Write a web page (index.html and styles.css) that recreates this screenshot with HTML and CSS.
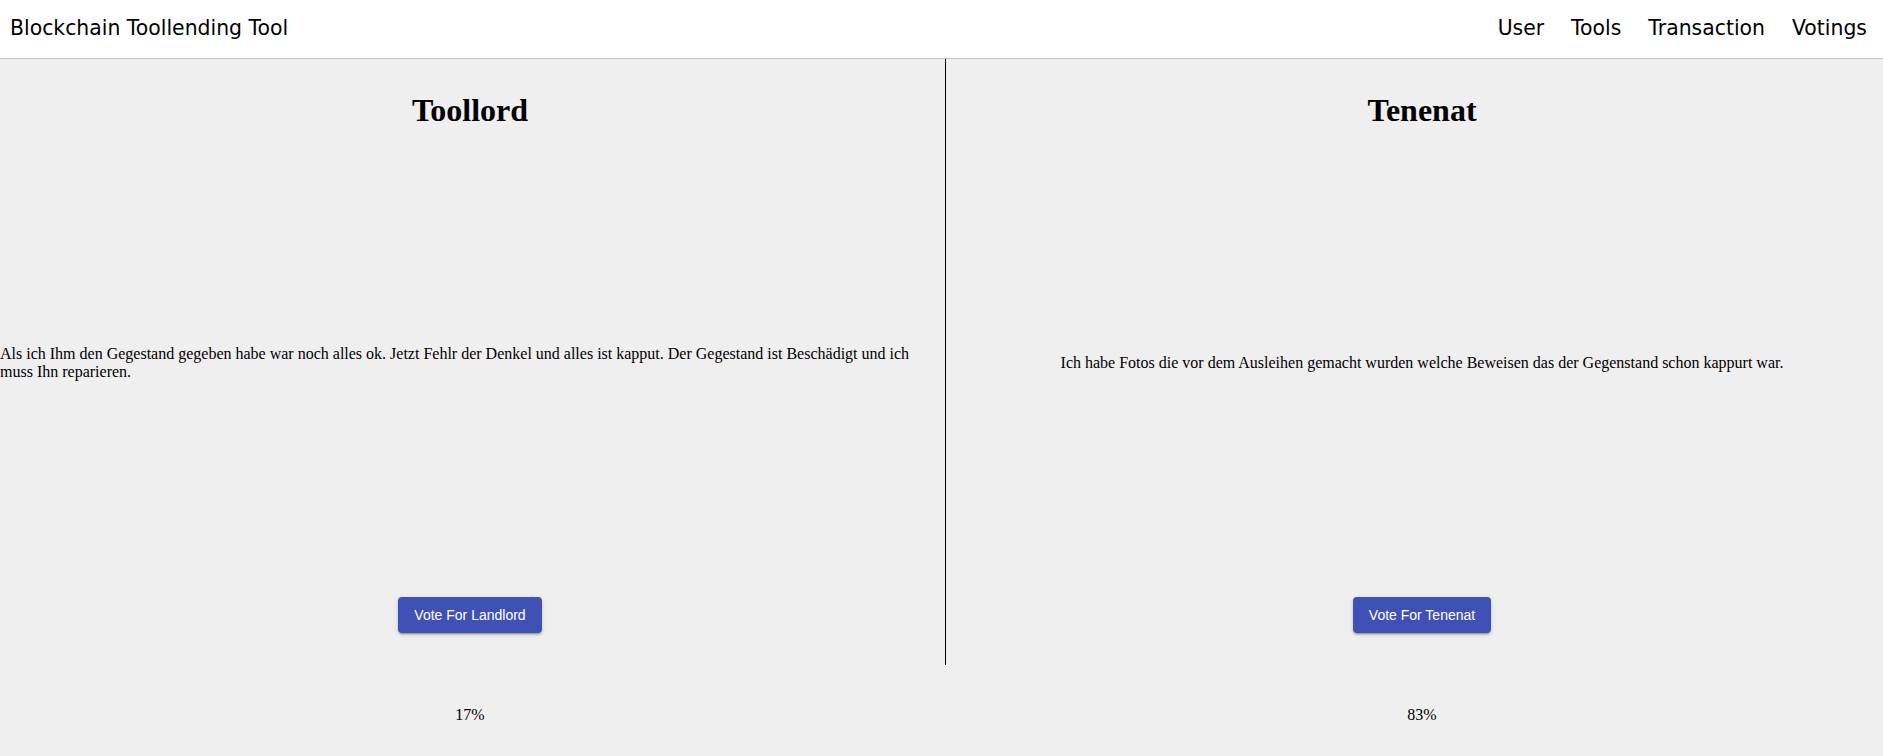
FILE: index.html
```html
<!DOCTYPE html>
<html lang="de">
<head>
<meta charset="utf-8">
<title>Blockchain Toollending Tool</title>
<link rel="stylesheet" href="styles.css">
</head>
<body>
<header class="toolbar">
  <span class="brand">Blockchain Toollending Tool</span>
  <nav class="nav">
    <a class="nav-link" href="#">User</a>
    <a class="nav-link" href="#">Tools</a>
    <a class="nav-link" href="#">Transaction</a>
    <a class="nav-link" href="#">Votings</a>
  </nav>
</header>
<main class="board">
  <div class="cell left row-head"><h1 class="title">Toollord</h1></div>
  <div class="cell right row-head"><h1 class="title">Tenenat</h1></div>

  <div class="cell left row-text text-left"><p class="statement">Als ich Ihm den Gegestand gegeben habe war noch alles ok. Jetzt Fehlr der Denkel und alles ist kapput. Der Gegestand ist Beschädigt und ich muss Ihn reparieren.</p></div>
  <div class="cell right row-text"><p class="statement">Ich habe Fotos die vor dem Ausleihen gemacht wurden welche Beweisen das der Gegenstand schon kappurt war.</p></div>

  <div class="cell left row-btn"><button class="vote-btn" type="button">Vote For Landlord</button></div>
  <div class="cell right row-btn"><button class="vote-btn" type="button">Vote For Tenenat</button></div>

  <div class="cell left-plain row-pct"><span class="pct">17%</span></div>
  <div class="cell right row-pct"><span class="pct">83%</span></div>
</main>
</body>
</html>
```
FILE: styles.css
```css
html, body {
  margin: 0;
  padding: 0;
}

body {
  background: #efefef;
  color: #000;
  font-family: "Liberation Serif", "Times New Roman", serif;
  font-size: 16px;
  overflow: hidden;
}

.toolbar {
  height: 56px;
  padding: 0 16px 2px 10px;
  background: #ffffff;
  border-bottom: 1px solid #c3c3c3;
  display: flex;
  align-items: center;
  justify-content: space-between;
  font-family: "DejaVu Sans", Verdana, sans-serif;
  font-size: 20.4px;
  color: #000;
}

.brand {
  white-space: nowrap;
}

.nav {
  display: flex;
  gap: 27px;
}

.nav-link {
  color: #000;
  text-decoration: none;
}

.board {
  display: grid;
  grid-template-columns: 946px 1fr;
  grid-template-rows: 102px 404px 100px 100px;
}

.cell {
  display: flex;
  align-items: center;
  justify-content: center;
  text-align: center;
  min-width: 0;
}

.left {
  padding-right: 5px;
  border-right: 1px solid #000;
}

.left-plain {
  padding-right: 6px;
}

.right {
  padding-left: 15px;
}

.text-left {
  justify-content: flex-start;
  text-align: left;
}

.title {
  margin: 0;
  font-size: 32px;
  font-weight: bold;
  line-height: 37px;
}

.statement {
  margin: 0;
  line-height: 18px;
}

.vote-btn {
  height: 36px;
  padding: 0 16px;
  border: none;
  border-radius: 4px;
  background: #3f51b5;
  color: #ffffff;
  font-family: "Liberation Sans", Arial, sans-serif;
  font-size: 14px;
  box-shadow: 0 3px 1px -2px rgba(0,0,0,.2), 0 2px 2px 0 rgba(0,0,0,.14), 0 1px 5px 0 rgba(0,0,0,.12);
  cursor: pointer;
}

.pct {
  line-height: 18px;
}
```
